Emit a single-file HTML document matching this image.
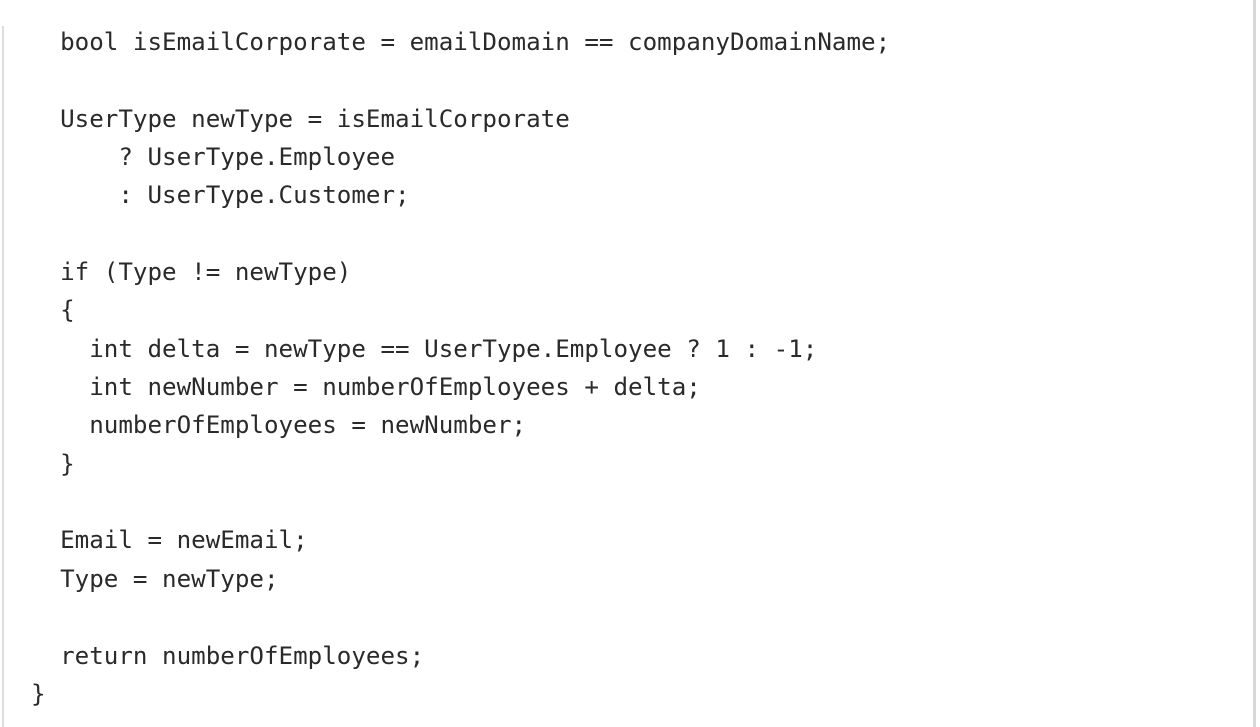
<!DOCTYPE html>
<html><head><style>
html,body{margin:0;padding:0;background:#fff;width:1260px;height:727px;overflow:hidden}
.bl{position:absolute;left:2px;top:26px;width:2px;height:701px;background:#ddd}
.br{position:absolute;left:1253px;top:0;width:3px;height:727px;background:#d8d8d8}
pre{position:absolute;left:31px;top:23px;margin:0;font-family:"DejaVu Sans Mono","Liberation Mono",monospace;font-size:24.2px;line-height:38.35px;color:#2a2a2a;letter-spacing:0px}
</style></head><body>
<div class="bl"></div><div class="br"></div>
<pre>  bool isEmailCorporate = emailDomain == companyDomainName;

  UserType newType = isEmailCorporate
      ? UserType.Employee
      : UserType.Customer;

  if (Type != newType)
  {
    int delta = newType == UserType.Employee ? 1 : -1;
    int newNumber = numberOfEmployees + delta;
    numberOfEmployees = newNumber;
  }

  Email = newEmail;
  Type = newType;

  return numberOfEmployees;
}</pre>
</body></html>
